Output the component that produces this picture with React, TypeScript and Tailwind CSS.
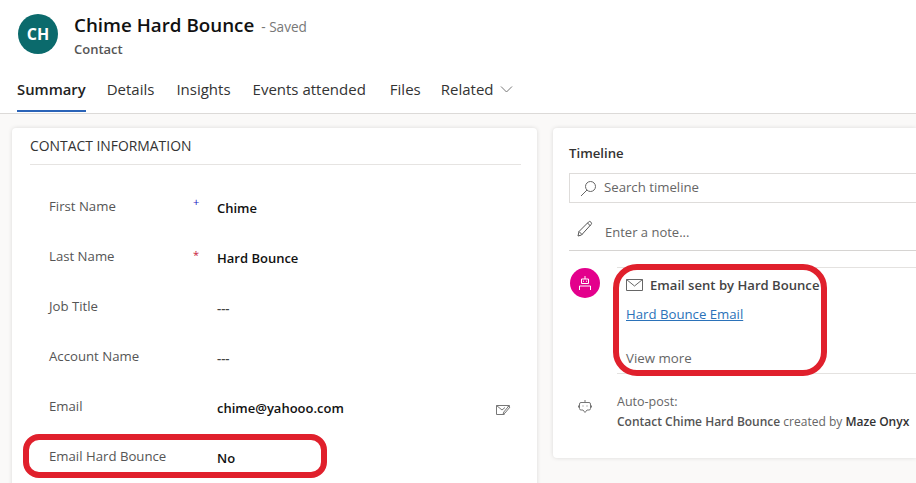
import React from "react";

const font = { fontFamily: '"Open Sans","Noto Sans",sans-serif' };

function Field({ label, value, mark, markClass, dim, icon }: { label: string; value: string; mark?: string; markClass?: string; dim?: boolean; icon?: boolean }) {
  return (
    <div className="flex h-[50px] items-start">
      <div className="w-[144px] pt-[7px] text-[13.2px] leading-[18px] text-[#555]">{label}</div>
      <div className={`w-[24px] text-[11px] leading-[14px] ${markClass ?? ""}`}>{mark}</div>
      <div className={`flex-1 pt-[9px] text-[13px] leading-[18px] font-semibold ${dim ? "text-[#444]" : "text-[#111]"}`}>{value}</div>
      {icon && (
        <svg className="mt-[13px] mr-[10px]" width="16" height="14" viewBox="0 0 16 14" fill="none" stroke="#777" strokeWidth="1">
          <path d="M1.5 2.5h13l-2 1.500M1.5 2.500v9h8M1.500 2.500l5.500 4.500 3-2.500M15 4l-5 6-2 1.500.8-2.500 5-6z" />
        </svg>
      )}
    </div>
  );
}

export default function App() {
  return (
    <div className="relative h-[483px] w-[916px] overflow-hidden bg-[#faf9f8]" style={font}>
      <header className="h-[114px] border-b border-[#dcdad8] bg-white">
        <div className="flex pl-[18px] pt-[14px]">
          <div className="flex h-[40px] w-[40px] items-center justify-center rounded-full bg-[#0b6a6c] text-[16px] font-bold text-white">CH</div>
          <div className="ml-[16px]">
            <div className="flex items-baseline">
              <span className="text-[18.8px] font-semibold leading-[23px] text-[#111]">Chime Hard Bounce</span>
              <span className="ml-[7px] text-[13.6px] text-[#777]">- Saved</span>
            </div>
            <div className="mt-[3px] text-[13px] font-semibold leading-[18px] text-[#555]">Contact</div>
          </div>
        </div>
        <nav className="mt-[20px] flex pl-[17px] text-[15px] text-[#333]">
          <div className="mr-[21px] flex h-[34px] flex-col justify-between">
            <span className="text-[14.8px] font-semibold leading-[22px] text-[#222]">Summary</span>
            <span className="h-[2px] bg-[#2b64b8]" />
          </div>
          <span className="mr-[22px] leading-[22px]">Details</span>
          <span className="mr-[22px] leading-[22px]">Insights</span>
          <span className="mr-[24px] leading-[22px]">Events attended</span>
          <span className="mr-[20px] leading-[22px]">Files</span>
          <span className="leading-[22px]">Related</span>
          <svg className="ml-[7px] mt-[7px]" width="13" height="9" viewBox="0 0 13 9" fill="none" stroke="#777" strokeWidth="1"><path d="M1 1.500l5.500 5.500 5.500-5.500" /></svg>
        </nav>
      </header>

      <main className="flex gap-[16px] pl-[12px] pt-[14px]">
        <section className="h-[400px] w-[525px] shrink-0 rounded-[4px] bg-white pl-[18px] pr-[16px] shadow-[0_0_4px_rgba(0,0,0,0.13)]">
          <div className="h-[37px] border-b border-[#e6e4e2] pt-[9px] text-[13.900px] leading-[18px] text-[#333]">CONTACT INFORMATION</div>
          <div className="pl-[19px] pt-[25px]">
            <Field label="First Name" value="Chime" mark="+" markClass="pt-[5px] text-[#2020c0]" />
            <Field label="Last Name" value="Hard Bounce" mark="*" markClass="pt-[8px] text-[#c8203c]" />
            <Field label="Job Title" value="---" dim />
            <Field label="Account Name" value="---" dim />
            <Field label="Email" value="chime@yahooo.com" icon />
            <Field label="Email Hard Bounce" value="No" />
          </div>
        </section>

        <section className="h-[330px] flex-1 rounded-l-[4px] bg-white pl-[16px] shadow-[0_0_4px_rgba(0,0,0,0.13)]">
          <div className="pt-[16px] text-[13.200px] font-semibold leading-[18px] text-[#333]">Timeline</div>
          <div className="mt-[11px] flex h-[30px] items-center border border-r-0 border-[#dedcda] pl-[10px]">
            <svg width="17" height="17" viewBox="0 0 17 17" fill="none" stroke="#666" strokeWidth="1"><circle cx="10.500" cy="6.500" r="5" /><path d="M7 10L1 16" /></svg>
            <span className="ml-[7px] text-[13.200px] text-[#666]">Search timeline</span>
          </div>
          <div className="flex h-[48px] items-center border-b border-[#d6d4d2] pl-[7px] pt-[12px]">
            <svg className="-mt-[7px]" width="18" height="18" viewBox="0 0 18 18" fill="none" stroke="#555" strokeWidth="1"><path d="M2 16l1-4.500L12.500 2a1.600 1.600 0 0 1 2.300 0l.2.2a1.600 1.600 0 0 1 0 2.300L5.500 15z M3 11.500l3 3 M11.500 3l3 3" /></svg>
            <span className="ml-[11px] text-[13px] text-[#666]">Enter a note...</span>
          </div>
          <div className="mt-[16px] flex">
            <div className="ml-[1px] mt-[1px] flex h-[30px] w-[30px] shrink-0 items-center justify-center rounded-full bg-[#e3008c]">
              <svg width="16" height="16" viewBox="0 0 16 16" fill="none" stroke="#fff" strokeWidth="1"><path d="M8 1v3M4.500 4h7v4.500h-7zM2.500 15v-4h11v4M6 6.200h1M9 6.200h1" /></svg>
            </div>
            <div className="ml-[17px] h-[107px] flex-1 border-y border-[#e4e2e0] pl-[9px]">
              <div className="flex items-center pt-[8px]">
                <svg width="17" height="12" viewBox="0 0 17 12" fill="none" stroke="#666" strokeWidth="1"><path d="M.5.500h16v11H.5zM.5.500l8 6.500 8-6.500" /></svg>
                <span className="ml-[7px] text-[13.100px] font-semibold leading-[18px] text-[#444]">Email sent by Hard Bounce</span>
              </div>
              <a className="mt-[11px] block text-[13.200px] leading-[18px] text-[#2b72b9] underline">Hard Bounce Email</a>
              <div className="mt-[26px] text-[13.300px] leading-[18px] text-[#666]">View more</div>
            </div>
          </div>
          <div className="mt-[18px] flex">
            <div className="w-[48px] pl-[9px] pt-[7px]">
              <svg width="14" height="16" viewBox="0 0 14 16" fill="none" stroke="#777" strokeWidth="1"><path d="M7 1v2.500M3 3.500h8a1.500 1.500 0 0 1 1.500 1.500v4.500a1.500 1.500 0 0 1-1.500 1.500H9l-2 2.500-2-2.500H3a1.500 1.500 0 0 1-1.500-1.500V5A1.500 1.500 0 0 1 3 3.500z" /><path d="M4.500 7h1M8.500 7h1M.5 6.500v2M13.500 6.500v2" /></svg>
            </div>
            <div className="leading-[20px]">
              <div className="text-[12.500px] text-[#666]">Auto-post:</div>
              <div className="whitespace-nowrap text-[12px] text-[#666]">
                <span className="font-semibold text-[#555]">Contact Chime Hard Bounce</span> created by <span className="font-semibold text-[#333]">Maze Onyx</span>
              </div>
            </div>
          </div>
        </section>
      </main>

      <div className="pointer-events-none absolute left-[23px] top-[434px] h-[44px] w-[304px] rounded-[16px] border-[6px] border-[#e0202c]" />
      <div className="pointer-events-none absolute left-[613px] top-[264px] h-[112px] w-[214px] rounded-[24px] border-[6px] border-[#e0202c]" />
    </div>
  );
}
